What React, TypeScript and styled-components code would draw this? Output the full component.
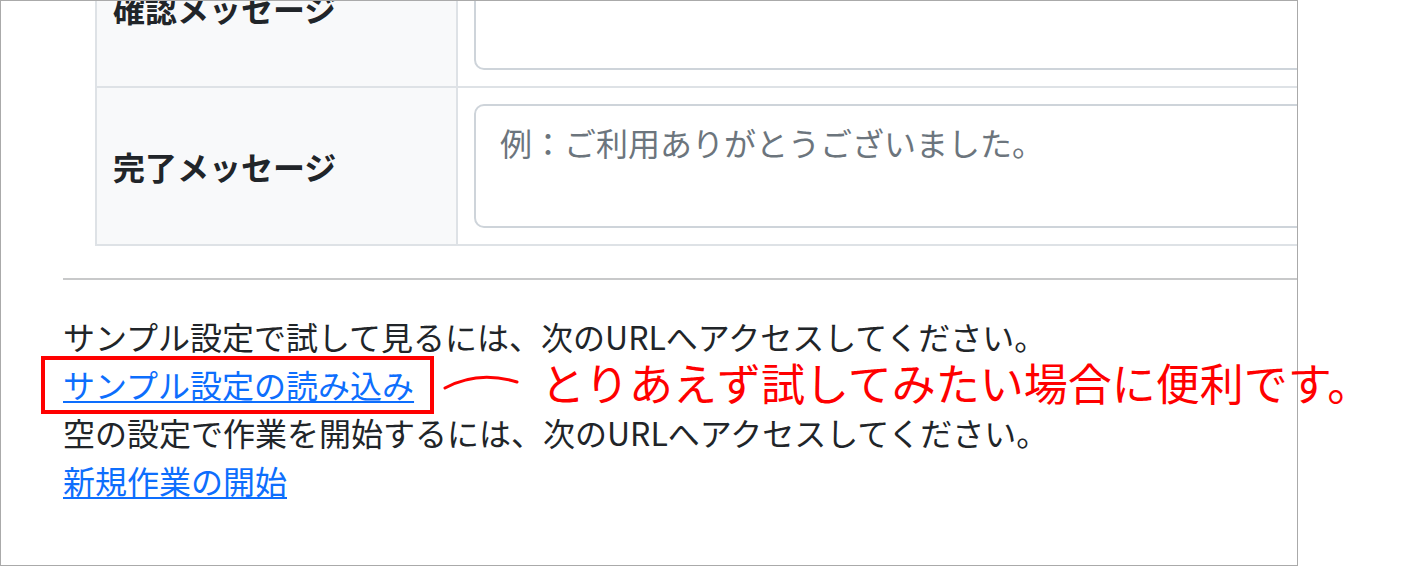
import React from "react";
import styled, { createGlobalStyle } from "styled-components";

const GlobalStyle = createGlobalStyle`
  html, body {
    margin: 0;
    padding: 0;
    background: #fff;
  }
  body {
    font-family: "Noto Sans CJK JP", "Noto Sans", sans-serif;
    color: #212529;
  }
`;

const Page = styled.div`
  position: relative;
  width: 1408px;
  height: 566px;
  overflow: hidden;
  background: #fff;
`;

const Frame = styled.div`
  box-sizing: border-box;
  width: 1298px;
  height: 566px;
  border: 1px solid #aaaaaa;
  overflow: hidden;
`;

const Content = styled.div`
  padding-left: 62px;
`;

const SettingsTable = styled.table`
  margin: -73px 0 0 32px;
  width: 1400px;
  border-collapse: collapse;
  table-layout: fixed;
`;

const LabelCell = styled.th`
  width: 327px;
  padding: 16px;
  border: 2px solid #dee2e6;
  background: #f8f9fa;
  text-align: left;
  vertical-align: middle;
  font-size: 32px;
  font-weight: 700;
  line-height: 48px;
  color: #212529;
`;

const FieldCell = styled.td`
  padding: 16px;
  border: 2px solid #dee2e6;
  vertical-align: top;
`;

const MessageArea = styled.textarea`
  display: block;
  box-sizing: border-box;
  width: 100%;
  height: 124px;
  margin: 0;
  padding: 12px 24px;
  border: 2px solid #ced4da;
  border-radius: 10px;
  font-family: "Noto Sans CJK JP", "Noto Sans", sans-serif;
  font-size: 32px;
  line-height: 48px;
  color: #212529;
  resize: none;
  outline: none;

  &::placeholder {
    color: #6c757d;
    opacity: 1;
  }
`;

const Divider = styled.hr`
  margin: 32px 0;
  border: 0;
  border-top: 2px solid #c8c9ca;
`;

const Line = styled.p`
  margin: 0;
  font-size: 32px;
  line-height: 48px;
  color: #212529;
  white-space: nowrap;
`;

const Link = styled.a`
  color: #0d6efd;
  text-decoration: underline;
  text-decoration-thickness: 2px;
  text-underline-offset: 3px;
`;

const Callout = styled.div`
  position: absolute;
  left: 41px;
  top: 356px;
  width: 393px;
  height: 58px;
  box-sizing: border-box;
  border: 4px solid #ff0000;
`;

const Leader = styled.svg`
  position: absolute;
  left: 440px;
  top: 366px;
  width: 84px;
  height: 30px;
`;

const Note = styled.div`
  position: absolute;
  left: 541px;
  top: 362px;
  font-size: 44px;
  line-height: 40px;
  font-weight: 400;
  color: #ff0000;
  white-space: nowrap;
`;

const rows = [
  { label: "確認メッセージ", placeholder: "" },
  { label: "完了メッセージ", placeholder: "例：ご利用ありがとうございました。" },
];

export default function App() {
  return (
    <>
      <GlobalStyle />
      <Page>
        <Frame>
          <Content>
            <SettingsTable>
              <tbody>
                {rows.map((row) => (
                  <tr key={row.label}>
                    <LabelCell>{row.label}</LabelCell>
                    <FieldCell>
                      <MessageArea placeholder={row.placeholder} rows={2} />
                    </FieldCell>
                  </tr>
                ))}
              </tbody>
            </SettingsTable>

            <Divider />

            <Line>サンプル設定で試して見るには、次のURLへアクセスしてください。</Line>
            <Line>
              <Link href="#">サンプル設定の読み込み</Link>
            </Line>
            <Line>空の設定で作業を開始するには、次のURLへアクセスしてください。</Line>
            <Line>
              <Link href="#">新規作業の開始</Link>
            </Line>
          </Content>
        </Frame>

        {/* annotation overlay */}
        <Callout />
        <Leader viewBox="0 0 84 30">
          <path
            d="M5 22 Q38 4 77 16"
            fill="none"
            stroke="#ff0000"
            strokeWidth="3"
            strokeLinecap="round"
          />
        </Leader>
        <Note>とりあえず試してみたい場合に便利です。</Note>
      </Page>
    </>
  );
}
